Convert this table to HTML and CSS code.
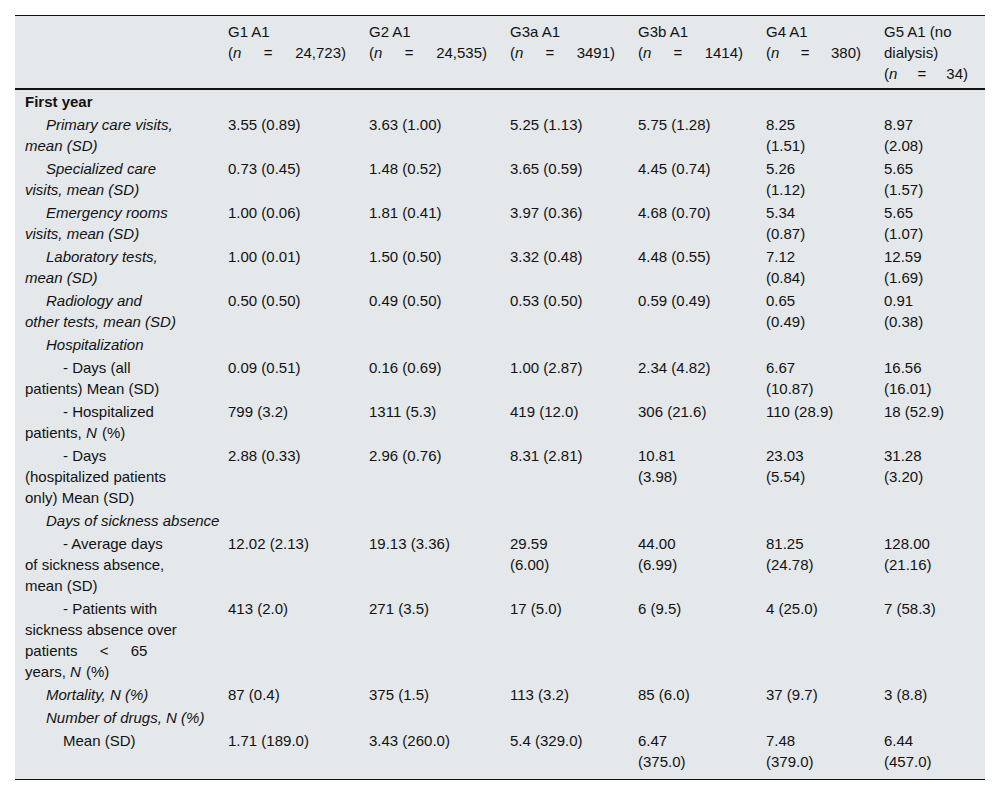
FILE: index.html
```html
<!DOCTYPE html>
<html lang="en">
<head>
<meta charset="utf-8">
<title>Table</title>
<link rel="stylesheet" href="styles.css">
</head>
<body>
<table class="tbl">
  <colgroup>
    <col class="w-label">
    <col class="w-g1">
    <col class="w-g2">
    <col class="w-g3a">
    <col class="w-g3b">
    <col class="w-g4">
    <col class="w-g5">
  </colgroup>
  <thead>
    <tr>
      <th></th>
      <th>G1 A1<div class="n">(<i>n</i> = 24,723)</div></th>
      <th>G2 A1<div class="n">(<i>n</i> = 24,535)</div></th>
      <th>G3a A1<div class="n">(<i>n</i> = 3491)</div></th>
      <th>G3b A1<div class="n">(<i>n</i> = 1414)</div></th>
      <th>G4 A1<div class="n">(<i>n</i> = 380)</div></th>
      <th class="h6">G5 A1 (no dialysis)<div class="n">(<i>n</i> = 34)</div></th>
    </tr>
  </thead>
  <tbody>
    <tr><td colspan="7" class="lbl"><b>First year</b></td></tr>
    <tr>
      <td class="lbl l1"><i>Primary care visits, mean (SD)</i></td>
      <td class="c1">3.55 (0.89)</td><td class="c2">3.63 (1.00)</td><td class="c3">5.25 (1.13)</td><td class="c4">5.75 (1.28)</td><td class="c5">8.25 (1.51)</td><td class="c6">8.97 (2.08)</td>
    </tr>
    <tr>
      <td class="lbl l1"><i>Specialized care visits, mean (SD)</i></td>
      <td class="c1">0.73 (0.45)</td><td class="c2">1.48 (0.52)</td><td class="c3">3.65 (0.59)</td><td class="c4">4.45 (0.74)</td><td class="c5">5.26 (1.12)</td><td class="c6">5.65 (1.57)</td>
    </tr>
    <tr>
      <td class="lbl l1"><i>Emergency rooms visits, mean (SD)</i></td>
      <td class="c1">1.00 (0.06)</td><td class="c2">1.81 (0.41)</td><td class="c3">3.97 (0.36)</td><td class="c4">4.68 (0.70)</td><td class="c5">5.34 (0.87)</td><td class="c6">5.65 (1.07)</td>
    </tr>
    <tr>
      <td class="lbl l1"><i>Laboratory tests, mean (SD)</i></td>
      <td class="c1">1.00 (0.01)</td><td class="c2">1.50 (0.50)</td><td class="c3">3.32 (0.48)</td><td class="c4">4.48 (0.55)</td><td class="c5">7.12 (0.84)</td><td class="c6">12.59 (1.69)</td>
    </tr>
    <tr>
      <td class="lbl l1"><i>Radiology and other tests, mean (SD)</i></td>
      <td class="c1">0.50 (0.50)</td><td class="c2">0.49 (0.50)</td><td class="c3">0.53 (0.50)</td><td class="c4">0.59 (0.49)</td><td class="c5">0.65 (0.49)</td><td class="c6">0.91 (0.38)</td>
    </tr>
    <tr><td colspan="7" class="lbl l1"><i>Hospitalization</i></td></tr>
    <tr>
      <td class="lbl l2">- Days (all patients) Mean (SD)</td>
      <td class="c1">0.09 (0.51)</td><td class="c2">0.16 (0.69)</td><td class="c3">1.00 (2.87)</td><td class="c4">2.34 (4.82)</td><td class="c5">6.67 (10.87)</td><td class="c6">16.56 (16.01)</td>
    </tr>
    <tr>
      <td class="lbl l2">- Hospitalized patients, <i class="nn">N</i> (%)</td>
      <td class="c1">799 (3.2)</td><td class="c2">1311 (5.3)</td><td class="c3">419 (12.0)</td><td class="c4">306 (21.6)</td><td class="c5">110 (28.9)</td><td class="c6">18 (52.9)</td>
    </tr>
    <tr>
      <td class="lbl l2">- Days (hospitalized patients only) Mean (SD)</td>
      <td class="c1">2.88 (0.33)</td><td class="c2">2.96 (0.76)</td><td class="c3">8.31 (2.81)</td><td class="c4">10.81 (3.98)</td><td class="c5">23.03 (5.54)</td><td class="c6">31.28 (3.20)</td>
    </tr>
    <tr><td colspan="7" class="lbl l1"><i>Days of sickness absence</i></td></tr>
    <tr>
      <td class="lbl l2">- Average days of sickness absence, mean (SD)</td>
      <td class="c1">12.02 (2.13)</td><td class="c2">19.13 (3.36)</td><td class="c3">29.59 (6.00)</td><td class="c4">44.00 (6.99)</td><td class="c5">81.25 (24.78)</td><td class="c6">128.00 (21.16)</td>
    </tr>
    <tr>
      <td class="lbl l2">- Patients with sickness absence over <span class="wide">patients &lt; 65</span> years, <i class="nn">N</i> (%)</td>
      <td class="c1">413 (2.0)</td><td class="c2">271 (3.5)</td><td class="c3">17 (5.0)</td><td class="c4">6 (9.5)</td><td class="c5">4 (25.0)</td><td class="c6">7 (58.3)</td>
    </tr>
    <tr>
      <td class="lbl l1"><i>Mortality, N (%)</i></td>
      <td class="c1">87 (0.4)</td><td class="c2">375 (1.5)</td><td class="c3">113 (3.2)</td><td class="c4">85 (6.0)</td><td class="c5">37 (9.7)</td><td class="c6">3 (8.8)</td>
    </tr>
    <tr><td colspan="7" class="lbl l1"><i>Number of drugs, N (%)</i></td></tr>
    <tr class="last">
      <td class="lbl l2">Mean (SD)</td>
      <td class="c1">1.71 (189.0)</td><td class="c2">3.43 (260.0)</td><td class="c3">5.4 (329.0)</td><td class="c4">6.47 (375.0)</td><td class="c5">7.48 (379.0)</td><td class="c6">6.44 (457.0)</td>
    </tr>
  </tbody>
</table>
</body>
</html>
```
FILE: styles.css
```css
html, body {
  margin: 0;
  padding: 0;
  background: #ffffff;
}

body {
  padding: 15px;
  font-family: "Liberation Sans", Arial, sans-serif;
  font-size: 15px;
  line-height: 21px;
  color: #121212;
}

.tbl {
  width: 970px;
  table-layout: fixed;
  border-collapse: collapse;
  background: #e4e8eb;
  border-top: 1px solid #121212;
  border-bottom: 1px solid #121212;
}

.w-label { width: 203px; }
.w-g1 { width: 141px; }
.w-g2 { width: 141px; }
.w-g3a { width: 128px; }
.w-g3b { width: 128px; }
.w-g4 { width: 118px; }
.w-g5 { width: 111px; }

.tbl th {
  font-weight: normal;
  text-align: left;
  vertical-align: top;
  padding: 5px 13px 4px 10px;
  border-bottom: 2px solid #121212;
}

.tbl th.h6 { padding-right: 17px; }

.tbl .n {
  text-align: justify;
  text-align-last: justify;
}

.tbl td {
  vertical-align: top;
  text-align: left;
  padding: 1px 10px 1px 10px;
}

.tbl td.lbl { padding-right: 39px; }
.tbl td.c1, .tbl td.c2 { padding-right: 45px; }
.tbl td.c3, .tbl td.c4 { padding-right: 42px; }
.tbl td.c5 { padding-right: 38px; }
.tbl td.c6 { padding-right: 31px; }

.tbl td.l1 { text-indent: 21px; }
.tbl td.l2 { text-indent: 38px; }

.tbl tr.last td { padding-bottom: 7px; }

.nn { margin-right: 1px; }

.wide { word-spacing: 18px; }
```
